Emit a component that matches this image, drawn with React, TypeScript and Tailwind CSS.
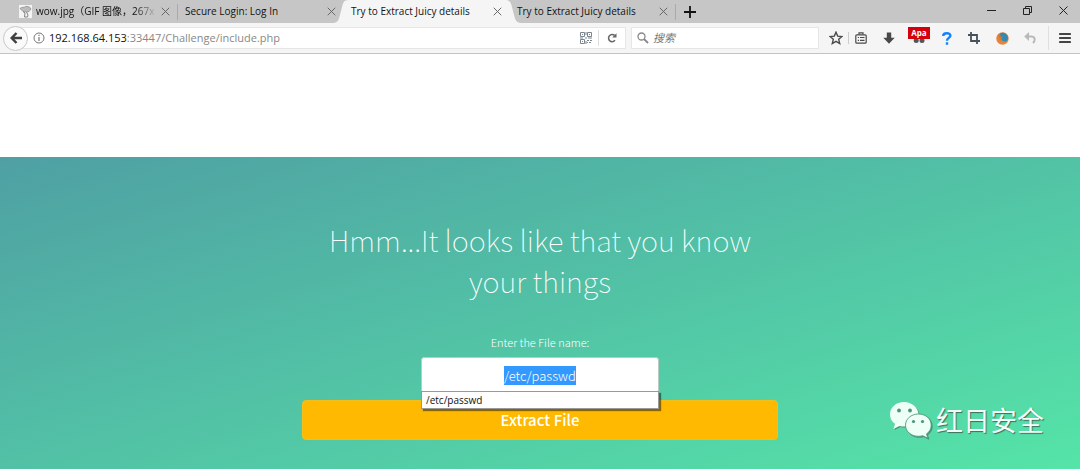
import { useEffect, useRef } from "react";
import type { ReactNode } from "react";

function CloseGlyph() {
  return (
    <svg viewBox="0 0 10 10" className="size-[9px]" fill="none" stroke="#666" strokeWidth="1.1">
      <path d="M.8.8l8.4 8.4M9.2.8L.8 9.2" />
    </svg>
  );
}

function Favicon() {
  return (
    <svg viewBox="0 0 13 13" className="mr-1 size-[13px] shrink-0">
      <rect width="13" height="13" fill="#f4f4f4" />
      <path d="M1 3.500C3 1.500 5 3 6.500 1.500 8 1 11 1.500 12 4l-2 2.500-2.500.5L4 6.500z" fill="#bbb" stroke="#888" strokeWidth=".7" />
      <path d="M4 6.500L6 8l-.5 4h3l.5-2-1.500-3" fill="none" stroke="#777" strokeWidth=".9" />
    </svg>
  );
}

type TabProps = { title: string; active?: boolean; divider?: boolean; icon?: ReactNode; faded?: boolean };

function Tab({ title, active, divider, icon, faded }: TabProps) {
  return (
    <div className={`relative flex h-full w-[166px] shrink-0 items-center pr-2 pl-[7px] ${active ? "z-10" : ""}`}>
      {active && (
        <svg viewBox="0 0 188 23" className="absolute top-0 -left-[11px] -z-10 h-[23px] w-[188px] fill-[#f5f5f5]">
          <path d="M0 23C6 23 6 18 8 11 10 3 10 0 16 0H172C178 0 178 3 180 11 182 18 182 23 188 23z" />
        </svg>
      )}
      {icon}
      <button
        type="button"
        className={`min-w-0 flex-1 text-left whitespace-nowrap ${faded ? "[mask-image:linear-gradient(to_right,black_82%,transparent)]" : ""}`}
      >
        {title}
      </button>
      <button type="button" aria-label={`Close ${title}`} className="ml-1">
        <CloseGlyph />
      </button>
      {divider && <span className="absolute top-1 right-0 h-4 w-px bg-[#aaa]" />}
    </div>
  );
}

function Tool({ label, className = "w-[28px]", children }: { label: string; className?: string; children: ReactNode }) {
  return (
    <button type="button" aria-label={label} className={`flex h-7 shrink-0 items-center justify-center ${className}`}>
      {children}
    </button>
  );
}

function TabBar() {
  return (
    <div className="flex h-[23px] items-center bg-[#c6c6c6] pl-3 text-[10px] text-[#111]">
      <Tab title="wow.jpg（GIF 图像，267x" icon={<Favicon />} divider faded />
      <Tab title="Secure Login: Log In" />
      <Tab title="Try to Extract Juicy details" active />
      <Tab title="Try to Extract Juicy details" divider />
      <button type="button" aria-label="New tab" className="ml-2">
        <svg viewBox="0 0 12 12" className="size-3" stroke="#111" strokeWidth="1.8">
          <path d="M6 0v12M0 6h12" />
        </svg>
      </button>
      <div className="ml-auto flex items-center gap-[27px] pr-3 pb-[3px]">
        <button type="button" aria-label="Minimize">
          <svg viewBox="0 0 9 9" className="size-[9px]" stroke="#222">
            <path d="M0 4.500h9" />
          </svg>
        </button>
        <button type="button" aria-label="Restore">
          <svg viewBox="0 0 9 9" className="size-[9px]" fill="none" stroke="#222">
            <path d="M.5 2.500h6v6h-6zM2.500 2.500v-2h6v6h-2" />
          </svg>
        </button>
        <button type="button" aria-label="Close window">
          <svg viewBox="0 0 9 9" className="size-[9px]" stroke="#222">
            <path d="M.5.5l8 8M8.500.5l-8 8" />
          </svg>
        </button>
      </div>
    </div>
  );
}

function QrGlyph() {
  return (
    <svg viewBox="0 0 12 12" className="size-3" fill="none" stroke="#7d858d">
      <path d="M.5.5h4v4h-4zM7.500.5h4v4h-4zM.5 7.500h4v4h-4z" />
      <path d="M2 2.500h1M9 2.500h1M2 9.500h1M6 0v3M6 5v2M0 6h3M8 6h4M7 8.500h2M10 8.500h2M7 10.500h1M9 10.500h2M6 9v3" />
    </svg>
  );
}

function NavBar() {
  return (
    <div className="flex h-[31px] items-center border-b border-[#c4c4c4] bg-[#f5f5f5] pl-[3px]">
      <button
        type="button"
        aria-label="Back"
        className="z-10 flex size-[25px] shrink-0 items-center justify-center rounded-full border border-[#c8c8c8] bg-[#fafafa]"
      >
        <svg viewBox="0 0 12 12" className="size-3" fill="none" stroke="#404040" strokeWidth="2.500">
          <path d="M6.500 1L1.700 6l4.800 5M2 6h10" />
        </svg>
      </button>
      <div className="-ml-2 flex h-[22px] min-w-0 flex-1 items-center border border-[#e6e6e6] bg-white pl-3">
        <svg viewBox="0 0 12 12" className="size-3 shrink-0" fill="none" stroke="#777">
          <circle cx="6" cy="6" r="5" />
          <path d="M6 5v4M6 2.800v1.300" strokeWidth="1.200" />
        </svg>
        <a href="#address" className="ml-1 flex-1 truncate text-[11px] text-[#888]">
          <span className="text-[#111]">192.168.64.153</span>:33447/Challenge/include.php
        </a>
        <QrGlyph />
        <span className="ml-1.5 h-4 w-px bg-[#ddd]" />
        <button type="button" aria-label="Reload" className="mx-2">
          <svg viewBox="0 0 10 10" className="size-[10px]" fill="none" stroke="#666" strokeWidth="1.500">
            <path d="M8 7.300A3.600 3.600 0 1 1 7.600 2.400" />
            <path d="M9.500.3v4.300H5.200z" fill="#666" stroke="none" />
          </svg>
        </button>
      </div>
      <label className="ml-[5px] flex h-[22px] w-[188px] shrink-0 items-center border border-[#e6e6e6] bg-white pl-[5px]">
        <svg viewBox="0 0 12 12" className="size-3 shrink-0" fill="none" stroke="#888" strokeWidth="1.300">
          <circle cx="4.500" cy="4.500" r="3.500" />
          <path d="M7 7l4 4" strokeWidth="1.800" />
        </svg>
        <input
          aria-label="搜索"
          placeholder="搜索"
          className="ml-1 min-w-0 flex-1 text-[11px] italic outline-none placeholder:text-[#777]"
        />
      </label>
      <div className="ml-1 flex items-center">
        <Tool label="Bookmark this page" className="w-[25px]">
          <svg viewBox="0 0 14 14" className="size-[14px]" fill="none" stroke="#4a4a4a" strokeWidth="1.400">
            <path d="M7 1.200l1.700 3.900 4.200.4-3.200 2.800 1 4.200L7 10.300l-3.700 2.200 1-4.200L1.100 5.500l4.200-.4z" />
          </svg>
        </Tool>
        <span className="h-3 w-px bg-[#ccc]" />
        <Tool label="Show bookmarks" className="w-6">
          <svg viewBox="0 0 12 12" className="size-3" fill="none" stroke="#4a4a4a" strokeWidth="1.200">
            <rect x=".8" y="2.800" width="10.400" height="8.400" rx="1" />
            <path d="M4 2.500V.8h4v1.700M2.800 5.500h1.200M5 5.500h4.500M2.800 8.300h1.200M5 8.300h4.500" />
          </svg>
        </Tool>
        <Tool label="Downloads" className="w-8">
          <svg viewBox="0 0 12 12" className="size-3" fill="#484848">
            <path d="M3.800.5h4.400v5.300h3.500L6 11.800.3 5.800h3.500z" />
          </svg>
        </Tool>
        <Tool label="Apa" className="relative w-[28px]">
          <svg viewBox="0 0 12 12" className="size-3" fill="#555">
            <circle cx="3.200" cy="8.500" r="2.500" />
            <circle cx="9" cy="8.500" r="2.500" />
          </svg>
          <span className="absolute top-[3px] left-[3px] flex h-3 w-[22px] items-center justify-center bg-[#d4000c] text-[8px] font-bold text-white">
            Apa
          </span>
        </Tool>
        <Tool label="Help" className="w-[27px]">
          <svg viewBox="0 0 10 13" className="h-[13px] w-[10px]" fill="none" stroke="#1282ff" strokeWidth="2.400">
            <path d="M1.200 4C1.200 .4 8.400.4 8.400 3.600 8.400 6 5 5.800 5 8.800M5 10.300v2.500" />
          </svg>
        </Tool>
        <Tool label="Crop">
          <svg viewBox="0 0 12 12" className="size-3" fill="none" stroke="#46515c" strokeWidth="1.800">
            <path d="M3 0v9h9M0 3h9v9" />
          </svg>
        </Tool>
        <Tool label="Firefox">
          <svg viewBox="0 0 13 13" className="size-[13px]">
            <circle cx="6.500" cy="6.500" r="6.200" fill="#e7843c" />
            <path d="M4 1.500C7-.5 12 1.500 12 6c0 2-1.300 3.500-3 3.500C6.500 9.500 5 8 5.500 6.500L4 5z" fill="#328bb5" />
            <path d="M2 3l2-1 .5 2.500L7 5 5 6.500 6.500 8 4 8.500z" fill="#dc742c" />
          </svg>
        </Tool>
        <Tool label="Undo">
          <svg viewBox="0 0 12 12" className="size-3" fill="none" stroke="#b9b9b9" strokeWidth="2">
            <path d="M3 4.500h4c4.500 0 4.500 4 2 6.500" />
            <path d="M5 0v9L.2 4.500z" fill="#b9b9b9" stroke="none" />
          </svg>
        </Tool>
        <span className="ml-1 h-6 w-px bg-[#e0e0e0]" />
        <Tool label="Open menu" className="w-[31px]">
          <svg viewBox="0 0 12 12" className="size-3" stroke="#444" strokeWidth="2.200" strokeLinecap="round">
            <path d="M1 2h10M1 6h10M1 10h10" />
          </svg>
        </Tool>
      </div>
    </div>
  );
}

function Watermark() {
  return (
    <div className="absolute right-9 bottom-[30px] flex items-center gap-1 text-[#f4fffa]">
      <svg viewBox="0 0 43 38" className="h-[38px] w-[43px] drop-shadow-[1px_1px_0_#4a8d74]">
        <path d="M15 1C7 1 1 6.500 1 13.500c0 4 2 7.300 5 9.500L4.500 28l6-3c1.500.4 3 .6 4.500.6 8 0 14.500-5.300 14.500-12.100S23 1 15 1z" fill="#edfff7" />
        <circle cx="10" cy="9.500" r="1.900" fill="#4b967b" />
        <circle cx="21" cy="9.500" r="1.900" fill="#4b967b" />
        <path d="M29.500 13C22 13 16.500 18 16.500 24.200S22 35.300 29.500 35.300c1.500 0 3-.2 4.300-.6l5 2.500-1.300-4.300c3-2 4.700-5 4.700-8.700C42.200 18 37 13 29.500 13z" fill="#edfff7" stroke="#529b80" strokeWidth=".9" />
        <circle cx="24.500" cy="20.500" r="1.600" fill="#4b967b" />
        <circle cx="33.500" cy="20.500" r="1.600" fill="#4b967b" />
      </svg>
      <span className="font-['Noto_Sans_CJK_SC',sans-serif] text-[27px] leading-9 [text-shadow:1px_1px_1px_#3d6e5c]">红日安全</span>
    </div>
  );
}

function FileForm() {
  const field = useRef<HTMLInputElement>(null);

  useEffect(() => {
    field.current?.focus();
    field.current?.select();
  }, []);

  return (
    <main className="relative flex flex-1 flex-col items-center bg-linear-[163deg,#4fa0a3_0%,#55e4a8_100%] px-4 pt-[62px] pb-[29px] font-['Noto_Sans_CJK_SC',sans-serif] text-white">
      <h1 className="max-w-[476px] text-center text-[29px] leading-[41px] font-thin">Hmm...It looks like that you know your things</h1>
      <form className="mt-8 flex w-full max-w-[476px] flex-col items-center" onSubmit={(e) => e.preventDefault()}>
        <label htmlFor="file" className="text-[11px] leading-[18px] font-light">
          Enter the File name:
        </label>
        <div className="relative mt-1.5 w-1/2">
          <input
            id="file"
            ref={field}
            defaultValue="/etc/passwd"
            autoComplete="off"
            className="block h-9 w-full rounded-[3px] border border-[#b9ccc4] bg-white text-center text-[13px] font-light text-[#444] outline-none selection:bg-[#3399ff] selection:text-white"
          />
          <button
            type="button"
            className="absolute top-[34px] left-0 h-[18px] w-full border border-[#999] bg-white px-1 text-left font-['Open_Sans',sans-serif] text-[10px] leading-4 text-[#111] shadow-[2px_2px_1px_rgba(0,0,0,0.45)]"
          >
            /etc/passwd
          </button>
        </div>
        <button type="submit" className="mt-[7px] h-10 w-full rounded-[4px] border border-[#f3c01a] bg-[#ffb900] text-[15px] font-medium">
          Extract File
        </button>
      </form>
      <Watermark />
    </main>
  );
}

export default function App() {
  return (
    <div className="flex min-h-screen flex-col bg-white font-['Open_Sans','Noto_Sans_CJK_SC',sans-serif]">
      <header>
        <TabBar />
        <NavBar />
      </header>
      <div className="h-[103px]" />
      <FileForm />
    </div>
  );
}
